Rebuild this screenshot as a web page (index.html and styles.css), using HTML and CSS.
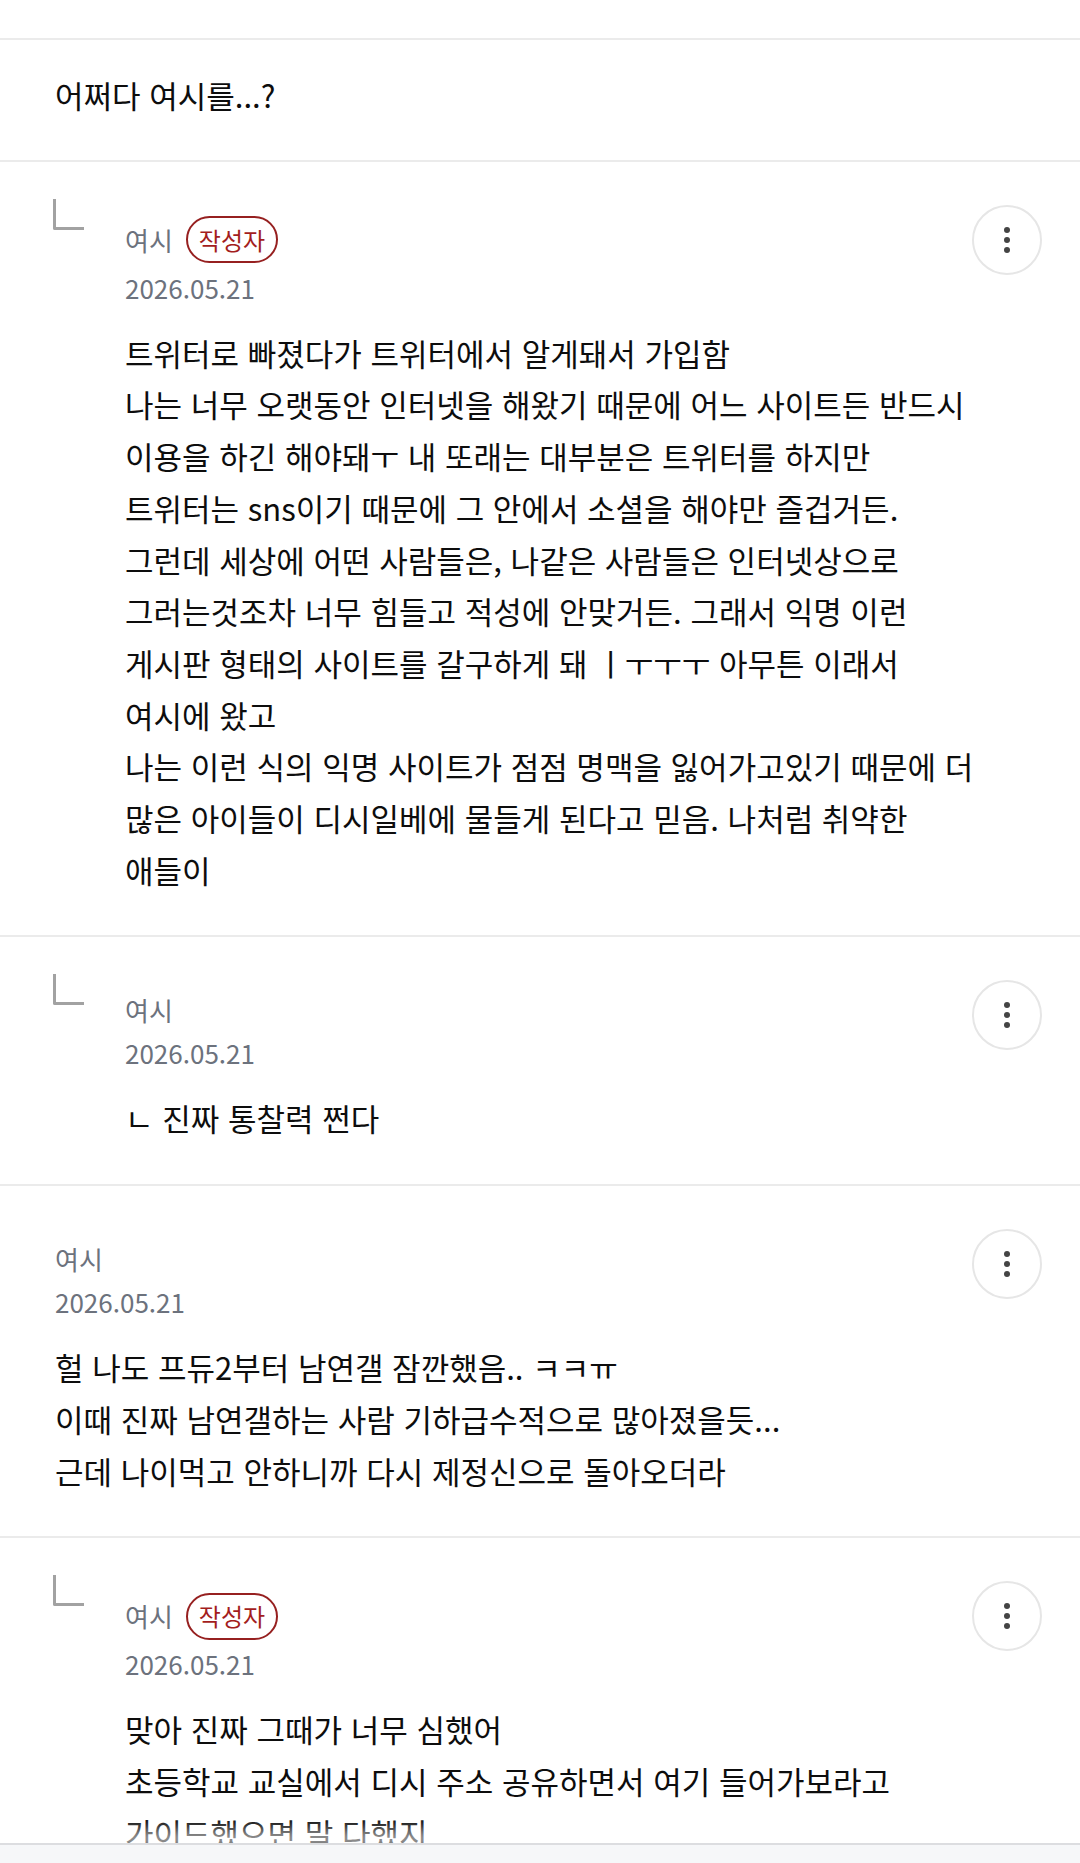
FILE: index.html
```html
<!DOCTYPE html>
<html lang="ko">
<head>
<meta charset="utf-8">
<title>댓글</title>
<link rel="stylesheet" href="styles.css">
</head>
<body>
<div class="page">
  <div class="topbar"></div>

  <div class="comment tail">
    <div class="main">
      <div class="body first">어쩌다 여시를...?</div>
    </div>
  </div>

  <div class="comment reply">
    <div class="indent"><span class="corner"></span></div>
    <div class="main">
      <div class="who"><span class="name">여시</span><span class="badge">작성자</span></div>
      <div class="date">2026.05.21</div>
      <div class="body">트위터로 빠졌다가 트위터에서 알게돼서 가입함<br>나는 너무 오랫동안 인터넷을 해왔기 때문에 어느 사이트든 반드시<br>이용을 하긴 해야돼ㅜ 내 또래는 대부분은 트위터를 하지만<br>트위터는 sns이기 때문에 그 안에서 소셜을 해야만 즐겁거든.<br>그런데 세상에 어떤 사람들은, 나같은 사람들은 인터넷상으로<br>그러는것조차 너무 힘들고 적성에 안맞거든. 그래서 익명 이런<br>게시판 형태의 사이트를 갈구하게 돼 ㅣㅜㅜㅜ 아무튼 이래서<br>여시에 왔고<br>나는 이런 식의 익명 사이트가 점점 명맥을 잃어가고있기 때문에 더<br>많은 아이들이 디시일베에 물들게 된다고 믿음. 나처럼 취약한<br>애들이</div>
    </div>
    <button class="more" type="button" aria-label="더보기"><span></span><span></span><span></span></button>
  </div>

  <div class="comment reply">
    <div class="indent"><span class="corner"></span></div>
    <div class="main">
      <div class="who plain"><span class="name">여시</span></div>
      <div class="date">2026.05.21</div>
      <div class="body">ㄴ 진짜 통찰력 쩐다</div>
    </div>
    <button class="more" type="button" aria-label="더보기"><span></span><span></span><span></span></button>
  </div>

  <div class="comment">
    <div class="main">
      <div class="who plain"><span class="name">여시</span></div>
      <div class="date">2026.05.21</div>
      <div class="body">헐 나도 프듀2부터 남연갤 잠깐했음.. ㅋㅋㅠ<br>이때 진짜 남연갤하는 사람 기하급수적으로 많아졌을듯...<br>근데 나이먹고 안하니까 다시 제정신으로 돌아오더라</div>
    </div>
    <button class="more" type="button" aria-label="더보기"><span></span><span></span><span></span></button>
  </div>

  <div class="comment reply">
    <div class="indent"><span class="corner"></span></div>
    <div class="main">
      <div class="who"><span class="name">여시</span><span class="badge">작성자</span></div>
      <div class="date">2026.05.21</div>
      <div class="body">맞아 진짜 그때가 너무 심했어<br>초등학교 교실에서 디시 주소 공유하면서 여기 들어가보라고<br>가이드했으면 말 다했지</div>
    </div>
    <button class="more" type="button" aria-label="더보기"><span></span><span></span><span></span></button>
  </div>
</div>
<div class="bottombar"></div>
</body>
</html>
```

FILE: styles.css
```css
* { box-sizing: border-box; }
html, body { margin: 0; padding: 0; background: #fff; }
body {
  font-family: "Noto Sans CJK KR", "Noto Sans", sans-serif;
  color: #111;
  width: 1080px;
  height: 1863px;
  overflow: hidden;
}
.page { width: 1080px; }
.topbar {
  height: 40px;
  border-bottom: 2px solid #ebebeb;
}
.comment {
  display: flex;
  align-items: flex-start;
  padding: 43px 38px 40px 55px;
  border-bottom: 2px solid #ebebeb;
}
.comment.tail { padding-top: 29px; padding-bottom: 39px; }
.indent {
  flex: none;
  width: 70px;
}
.corner {
  display: block;
  width: 31px;
  height: 31px;
  margin-left: -2px;
  margin-top: -6px;
  border-left: 3px solid #a2a2a2;
  border-bottom: 3px solid #a2a2a2;
  border-bottom-left-radius: 2px;
}
.main {
  flex: 1;
  min-width: 0;
  padding-top: 12px;
}
.tail .main { padding-top: 0; }
.who {
  display: flex;
  align-items: center;
  gap: 13px;
  height: 46px;
}
.who.plain { height: 36px; }
.name {
  font-size: 26px;
  line-height: 36px;
  color: #6c727d;
}
.badge {
  display: inline-flex;
  align-items: center;
  justify-content: center;
  height: 47px;
  padding: 0 11px;
  border: 2px solid #962020;
  border-radius: 24px;
  font-size: 24px;
  color: #a31d1d;
  line-height: 1;
}
.date {
  margin-top: 7px;
  font-size: 26px;
  line-height: 36px;
  color: #6c727d;
}
.body {
  margin-top: 21px;
  font-size: 31px;
  line-height: 51.7px;
  white-space: nowrap;
  color: #0d0d0d;
}
.body.first { margin-top: 0; }
.more {
  flex: none;
  width: 70px;
  height: 70px;
  margin: 0;
  padding: 0;
  border: 2px solid #e6e6e6;
  border-radius: 50%;
  background: #fff;
  display: flex;
  flex-direction: column;
  align-items: center;
  justify-content: center;
  gap: 4px;
}
.more span {
  display: block;
  width: 6px;
  height: 6px;
  border-radius: 50%;
  background: #444;
}
.bottombar {
  position: fixed;
  left: 0;
  right: 0;
  bottom: 0;
  height: 20px;
  background: #f6f7f9;
  border-top: 2px solid #dcdde0;
  box-shadow: 0 -14px 14px rgba(255,255,255,0.6);
}
```
